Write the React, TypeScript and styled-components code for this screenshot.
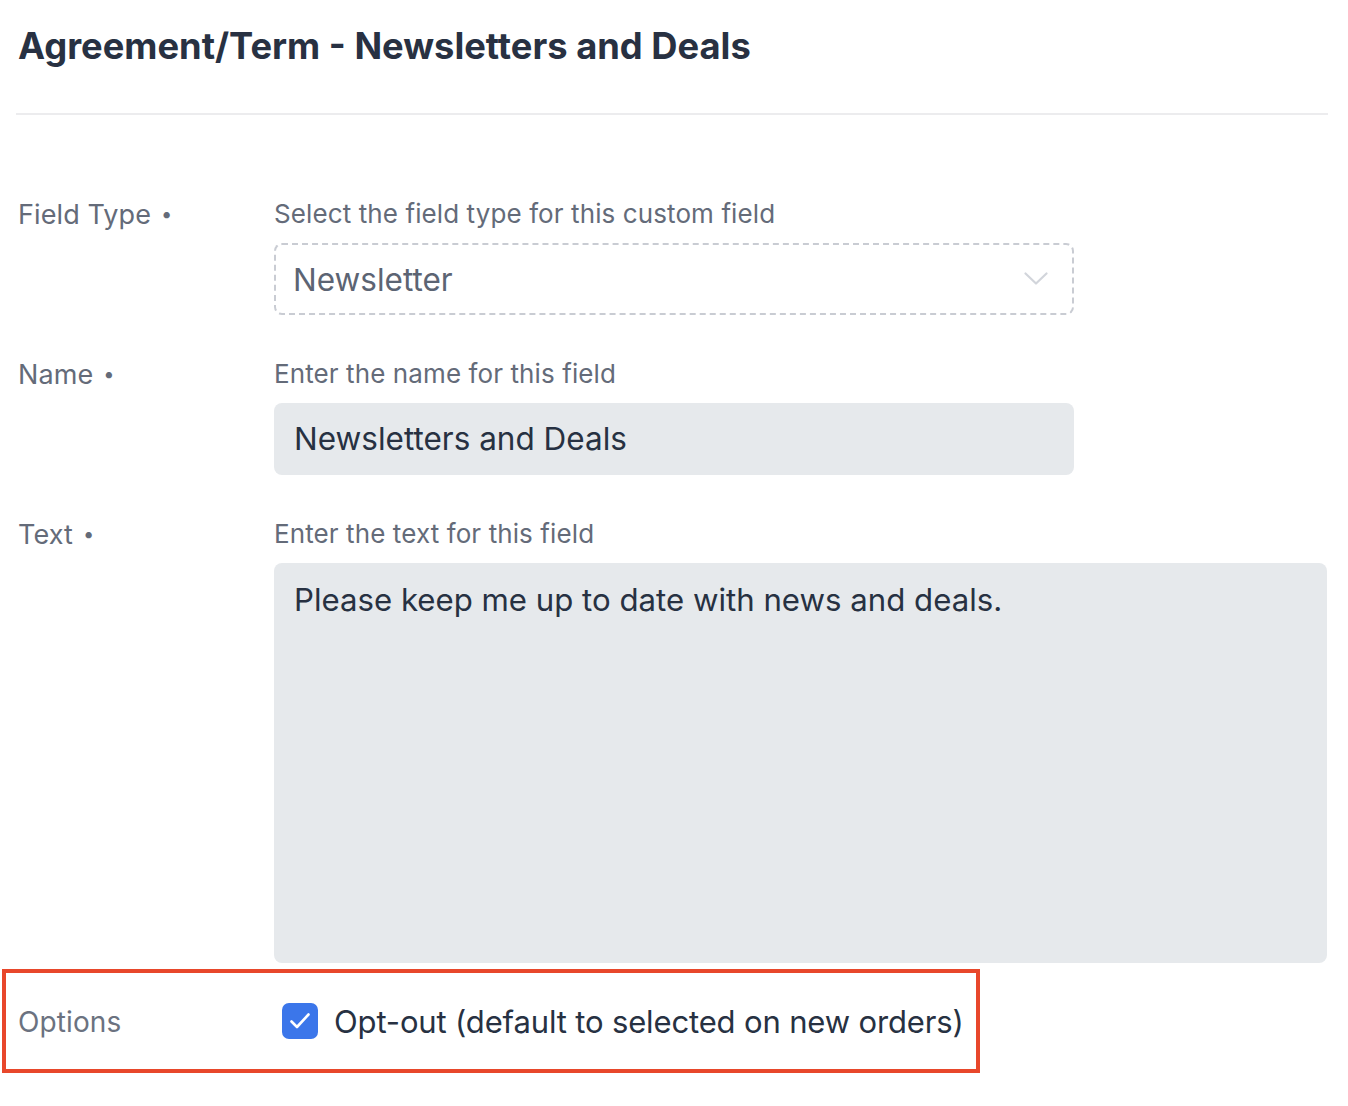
import React from "react";
import styled, { createGlobalStyle } from "styled-components";

const GlobalStyle = createGlobalStyle`
  html, body {
    margin: 0;
    padding: 0;
    background: #ffffff;
  }
  body {
    font-family: Inter, "Noto Sans", "Liberation Sans", sans-serif;
    -webkit-font-smoothing: antialiased;
  }
`;

const Page = styled.div`
  width: 1312px;
  padding: 24px 0 40px 16px;
`;

const Title = styled.h1`
  margin: 0 0 45px 2px;
  font-size: 36.3px;
  line-height: 44px;
  font-weight: 700;
  color: #283142;
`;

const Divider = styled.hr`
  margin: 0 0 83px 0;
  border: none;
  height: 2px;
  background: #ececee;
`;

const Form = styled.div`
  display: flex;
  flex-direction: column;
  gap: 43px;
`;

const Row = styled.div`
  display: grid;
  grid-template-columns: 258px 1fr;
  grid-template-rows: auto auto;
  row-gap: 12px;
`;

const Label = styled.div`
  padding-left: 2px;
  font-size: 27px;
  line-height: 32px;
  color: #646b79;
  letter-spacing: 0.1px;
`;

const Dot = styled.span`
  margin-left: 10px;
  font-size: 20px;
  vertical-align: 3px;
`;

const Help = styled.div`
  font-size: 26px;
  line-height: 32px;
  color: #646b79;
  letter-spacing: 0.1px;
`;

const Control = styled.div`
  grid-column: 2;
`;

const Select = styled.div`
  box-sizing: border-box;
  width: 800px;
  height: 72px;
  display: flex;
  align-items: center;
  justify-content: space-between;
  padding: 0 24px 0 17px;
  border: 2px dashed #c9ccd3;
  border-radius: 8px;
  font-size: 31.5px;
  color: #5c6473;
`;

const Input = styled.div<{ $wide?: boolean; $tall?: boolean }>`
  box-sizing: border-box;
  width: ${(p) => (p.$wide ? "1053px" : "800px")};
  height: ${(p) => (p.$tall ? "400px" : "72px")};
  display: flex;
  align-items: ${(p) => (p.$tall ? "flex-start" : "center")};
  padding: ${(p) => (p.$tall ? "17px 20px" : "0 20px")};
  background: #e6e9ec;
  border-radius: 8px;
  font-size: ${(p) => (p.$tall ? "31.2px" : "31.5px")};
  line-height: 40px;
  color: #273142;
`;

const OptionsBox = styled.div`
  box-sizing: border-box;
  width: 978px;
  height: 104px;
  margin: 6px 0 0 -14px;
  padding-left: 10px;
  border: 4px solid #e8472b;
  display: grid;
  grid-template-columns: 258px 1fr;
  align-items: center;
`;

const OptionsLabel = styled(Label)`
  padding-top: 2px;
  font-size: 28px;
  color: #6b7280;
`;

const Check = styled.label`
  display: flex;
  align-items: center;
  gap: 16px;
  padding-left: 8px;
  font-size: 31px;
  letter-spacing: -0.15px;
  white-space: nowrap;
  color: #273142;
`;

const Box = styled.span`
  flex: none;
  width: 36px;
  height: 36px;
  border-radius: 7px;
  background: #3b76ea;
  display: flex;
  align-items: center;
  justify-content: center;
`;

const Chevron = () => (
  <svg width="24" height="14" viewBox="0 0 24 14" fill="none">
    <path d="M1.5 1.5 L12 11.5 L22.5 1.5" stroke="#d2d5db" strokeWidth="2.2" strokeLinecap="round" strokeLinejoin="round" />
  </svg>
);

const Tick = () => (
  <svg width="22" height="18" viewBox="0 0 22 18" fill="none">
    <path d="M2.5 9.5 L8 15 L19.5 2.5" stroke="#ffffff" strokeWidth="2.6" strokeLinecap="round" strokeLinejoin="round" />
  </svg>
);

export default function App() {
  return (
    <Page>
      <GlobalStyle />
      <Title>Agreement/Term - Newsletters and Deals</Title>
      <Divider />
      <Form>
        <Row>
          <Label>
            Field Type<Dot>•</Dot>
          </Label>
          <Help>Select the field type for this custom field</Help>
          <Control>
            <Select>
              <span>Newsletter</span>
              <Chevron />
            </Select>
          </Control>
        </Row>
        <Row>
          <Label>
            Name<Dot>•</Dot>
          </Label>
          <Help>Enter the name for this field</Help>
          <Control>
            <Input>Newsletters and Deals</Input>
          </Control>
        </Row>
        <Row>
          <Label>
            Text<Dot>•</Dot>
          </Label>
          <Help>Enter the text for this field</Help>
          <Control>
            <Input $wide $tall>
              Please keep me up to date with news and deals.
            </Input>
          </Control>
        </Row>
      </Form>
      <OptionsBox>
        <OptionsLabel>Options</OptionsLabel>
        <Check>
          <Box>
            <Tick />
          </Box>
          Opt-out (default to selected on new orders)
        </Check>
      </OptionsBox>
    </Page>
  );
}
